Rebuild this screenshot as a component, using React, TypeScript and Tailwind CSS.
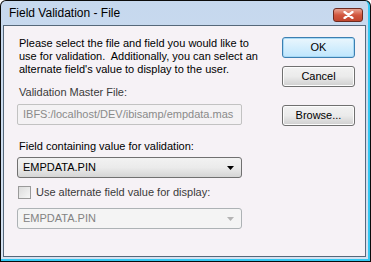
import React from "react";

const font = { fontFamily: '"Liberation Sans", Arial, sans-serif' };

const Caret = ({ disabled }: { disabled?: boolean }) => (
  <svg width="7" height="4" viewBox="0 0 7 4">
    <path d="M0 0h7L3.5 4z" fill={disabled ? "#b4b4b4" : "#000"} />
  </svg>
);

const Btn = ({ label, def }: { label: string; def?: boolean }) => (
  <div
    className={`w-[73px] h-[21px] flex items-center justify-center rounded-[3px] border text-[11px] text-black bg-gradient-to-b ${
      def
        ? "border-[#3c7fb1] from-[#eaf6fd] to-[#bee6fd] shadow-[inset_0_0_0_1px_#a7d9f5]"
        : "border-[#707070] from-[#f2f2f2] via-[#ebebeb] to-[#cfcfcf] shadow-[inset_0_0_0_1px_#fcfcfc]"
    }`}
  >
    {label}
  </div>
);

const Select = ({ value, disabled }: { value: string; disabled?: boolean }) => (
  <div
    className={`w-[225px] h-[21px] flex items-center justify-between pl-[5px] pr-[7px] rounded-[3px] border text-[11px] ${
      disabled
        ? "border-[#adb2b5] bg-[#f4f4f4] text-[#838383]"
        : "border-[#707070] bg-gradient-to-b from-[#f2f2f2] via-[#ebebeb] to-[#d5d5d5] text-black"
    }`}
  >
    <span>{value}</span>
    <Caret disabled={disabled} />
  </div>
);

export default function App() {
  return (
    <div
      style={font}
      className="w-[371px] h-[262px] flex flex-col bg-[#0b0b0b] p-[1px] rounded-t-[6px]"
    >
      <div className="flex flex-col flex-1 rounded-t-[5px] bg-gradient-to-b from-[#c6d8ee] to-[#d5e2f1] px-[2px] pb-[2px] border-b-[2px] border-r-[2px] border-[#33c8f2]">
        {/* title bar */}
        <div className="h-[24px] flex items-center justify-between pl-[6px] pr-[3px]">
          <span className="text-[12px] text-black">Field Validation - File</span>
          <div className="w-[30px] h-[14px] mt-[3px] rounded-[3px] border border-[#6d2a20] bg-gradient-to-b from-[#e8a493] via-[#d2573f] to-[#c0462e] flex items-center justify-center">
            <svg width="11" height="8" viewBox="0 0 11 8">
              <path
                d="M1.5 1l8 6M9.5 1l-8 6"
                stroke="#fff"
                strokeWidth="2.2"
                strokeLinecap="round"
              />
            </svg>
          </div>
        </div>
        {/* client area */}
        <div className="flex-1 flex border border-[#56687a] bg-[#f6f2f6] pl-[13px] pr-[10px] pt-[11px]">
          <div className="flex flex-col w-[266px] text-[11px] text-black">
            <p className="leading-[13px] pl-[2px]">
              Please select the file and field you would like to
              <br />
              use for validation.&nbsp; Additionally, you can select an
              <br />
              alternate field's value to display to the user.
            </p>
            <div className="mt-[10px] pl-[2px] leading-[13px] text-[#3a3a3a]">
              Validation Master File:
            </div>
            <div className="mt-[5px] w-[225px] h-[21px] flex items-center pl-[5px] border border-[#c2c2c2] rounded-[2px] bg-[#f4f2f4] text-[#8a8a8a]">
              IBFS:/localhost/DEV/ibisamp/empdata.mas
            </div>
            <div className="mt-[15px] pl-[2px] leading-[13px]">
              Field containing value for validation:
            </div>
            <div className="mt-[4px]">
              <Select value="EMPDATA.PIN" />
            </div>
            <div className="mt-[8px] flex items-center gap-[5px] pl-[1px]">
              <div className="w-[13px] h-[13px] border border-[#9a9a9a] bg-gradient-to-br from-[#dcdcdc] to-[#f7f7f7]" />
              <span className="text-[#3a3a3a] leading-[13px]">
                Use alternate field value for display:
              </span>
            </div>
            <div className="mt-[9px]">
              <Select value="EMPDATA.PIN" disabled />
            </div>
          </div>
          <div className="flex flex-col">
            <Btn label="OK" def />
            <div className="mt-[8px]">
              <Btn label="Cancel" />
            </div>
            <div className="mt-[18px]">
              <Btn label="Browse..." />
            </div>
          </div>
        </div>
      </div>
    </div>
  );
}
